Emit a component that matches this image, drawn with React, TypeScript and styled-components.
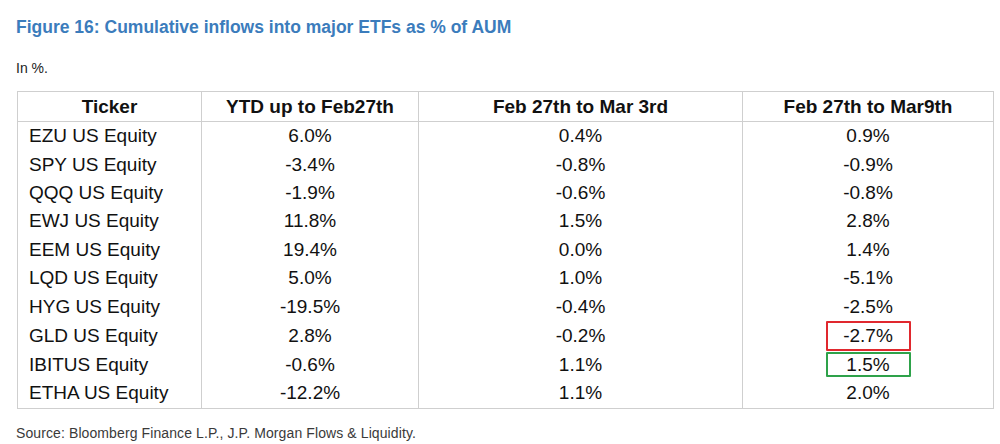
import React from "react";
import styled, { createGlobalStyle } from "styled-components";

const GlobalStyle = createGlobalStyle`
  body {
    margin: 0;
    background: #ffffff;
    font-family: "Liberation Sans", Arial, Helvetica, sans-serif;
    color: #111111;
  }
`;

const Page = styled.div`
  width: 1000px;
  height: 444px;
  padding: 16px 7px 0 16px;
  box-sizing: border-box;
  overflow: hidden;
`;

const Title = styled.div`
  font-size: 17.5px;
  font-weight: 700;
  color: #3b7cbc;
  line-height: 22px;
`;

const Unit = styled.div`
  margin-top: 22px;
  font-size: 14px;
  line-height: 16px;
  color: #222222;
`;

const Table = styled.table`
  margin-top: 15px;
  margin-left: 1px;
  width: 976px;
  border-collapse: collapse;
  table-layout: fixed;
  border: 1.5px solid #cfcfcf;
  font-size: 19px;
`;

const HeadCell = styled.th`
  height: 29px;
  padding: 0;
  font-weight: 700;
  font-size: 19px;
  text-align: center;
  border: 1.5px solid #cfcfcf;
`;

const Cell = styled.td<{ $left?: boolean }>`
  height: 28.4px;
  padding: 0 0 0 ${(p) => (p.$left ? "11px" : "0")};
  text-align: ${(p) => (p.$left ? "left" : "center")};
  border-left: 1.5px solid #cfcfcf;
  border-right: 1.5px solid #cfcfcf;
  line-height: 20px;
  vertical-align: middle;
`;

const Mark = styled.span<{ $color: string; $h: number }>`
  display: inline-block;
  box-sizing: border-box;
  width: 85px;
  height: ${(p) => p.$h}px;
  line-height: ${(p) => p.$h - 4}px;
  border: 2px solid ${(p) => p.$color};
  border-radius: 1px;
  vertical-align: middle;
`;

const Source = styled.div`
  margin-top: 16px;
  font-size: 14px;
  color: #3a3a3a;
  letter-spacing: 0.1px;
`;

const rows = [
  ["EZU US Equity", "6.0%", "0.4%", "0.9%"],
  ["SPY US Equity", "-3.4%", "-0.8%", "-0.9%"],
  ["QQQ US Equity", "-1.9%", "-0.6%", "-0.8%"],
  ["EWJ US Equity", "11.8%", "1.5%", "2.8%"],
  ["EEM US Equity", "19.4%", "0.0%", "1.4%"],
  ["LQD US Equity", "5.0%", "1.0%", "-5.1%"],
  ["HYG US Equity", "-19.5%", "-0.4%", "-2.5%"],
  ["GLD US Equity", "2.8%", "-0.2%", "-2.7%"],
  ["IBITUS Equity", "-0.6%", "1.1%", "1.5%"],
  ["ETHA US Equity", "-12.2%", "1.1%", "2.0%"],
];

const marks: Record<number, { color: string; h: number }> = {
  7: { color: "#e0282e", h: 30 },
  8: { color: "#2ea24a", h: 25 },
};

const App = () => {
  return (
    <Page>
      <GlobalStyle />
      <Title>Figure 16: Cumulative inflows into major ETFs as % of AUM</Title>
      <Unit>In %.</Unit>
      <Table>
        <colgroup>
          <col style={{ width: 184 }} />
          <col style={{ width: 217 }} />
          <col style={{ width: 324 }} />
          <col style={{ width: 251 }} />
        </colgroup>
        <thead>
          <tr>
            <HeadCell>Ticker</HeadCell>
            <HeadCell>YTD up to Feb27th</HeadCell>
            <HeadCell>Feb 27th to Mar 3rd</HeadCell>
            <HeadCell>Feb 27th to Mar9th</HeadCell>
          </tr>
        </thead>
        <tbody>
          {rows.map((r, i) => (
            <tr key={r[0]}>
              <Cell $left>{r[0]}</Cell>
              <Cell>{r[1]}</Cell>
              <Cell>{r[2]}</Cell>
              <Cell>
                {marks[i] ? (
                  <Mark $color={marks[i].color} $h={marks[i].h}>
                    {r[3]}
                  </Mark>
                ) : (
                  r[3]
                )}
              </Cell>
            </tr>
          ))}
        </tbody>
      </Table>
      <Source>Source: Bloomberg Finance L.P., J.P. Morgan Flows &amp; Liquidity.</Source>
    </Page>
  );
};

export default App;
